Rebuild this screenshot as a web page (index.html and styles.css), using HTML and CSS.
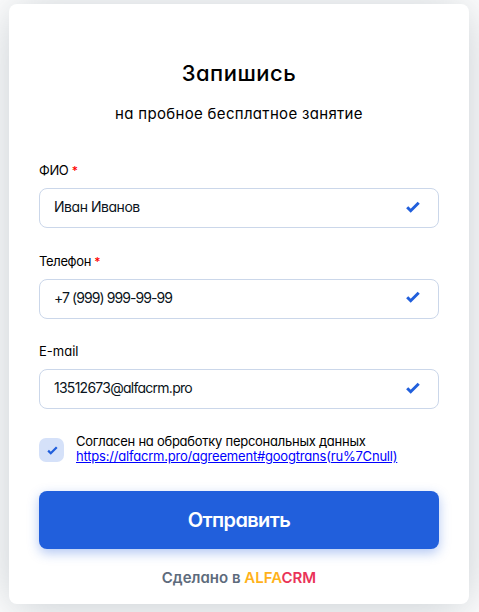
FILE: index.html
```html
<!DOCTYPE html>
<html lang="ru">
<head>
  <meta charset="UTF-8">
  <meta name="viewport" content="width=device-width, initial-scale=1.0">
  <title>Запись на занятие</title>
  <link rel="stylesheet" href="styles.css">
</head>
<body>
  <form class="form-card">
    <h1 class="form-title">Запишись</h1>
    <p class="form-subtitle">на пробное бесплатное занятие</p>

    <div class="field">
      <label class="field-label" for="name">ФИО <span class="required">*</span></label>
      <div class="field-box">
        <input class="field-input input-name" id="name" type="text" value="Иван Иванов">
        <svg class="check" viewBox="0 0 14 12"><path d="M1.2 6.2 4.7 9.7 12.7 1.7"/></svg>
      </div>
    </div>

    <div class="field">
      <label class="field-label" for="phone">Телефон <span class="required">*</span></label>
      <div class="field-box">
        <input class="field-input input-phone" id="phone" type="tel" value="+7 (999) 999-99-99">
        <svg class="check check-raised" viewBox="0 0 14 12"><path d="M1.2 6.2 4.7 9.7 12.7 1.7"/></svg>
      </div>
    </div>

    <div class="field">
      <label class="field-label label-email" for="email">E-mail</label>
      <div class="field-box">
        <input class="field-input input-email" id="email" type="text" value="13512673@alfacrm.pro">
        <svg class="check" viewBox="0 0 14 12"><path d="M1.2 6.2 4.7 9.7 12.7 1.7"/></svg>
      </div>
    </div>

    <div class="agreement">
      <span class="checkbox">
        <svg class="check-small" viewBox="0 0 14 12"><path d="M1.2 6.2 4.7 9.7 12.7 1.7"/></svg>
      </span>
      <div class="agreement-text">
        <div class="agreement-line">Согласен на обработку персональных данных</div>
        <a class="agreement-link" href="https://alfacrm.pro/agreement#googtrans(ru%7Cnull)">https://alfacrm.pro/agreement#googtrans(ru%7Cnull)</a>
      </div>
    </div>

    <button class="submit" type="button">Отправить</button>

    <div class="made-in">Сделано в <span class="brand"><span class="alfa">ALFA</span><span class="crm">CRM</span></span></div>
  </form>
</body>
</html>
```

FILE: styles.css
```css
* {
  box-sizing: border-box;
}

body {
  margin: 0;
  padding: 4px 10px 8px 9px;
  height: 612px;
  overflow: hidden;
  background: #fff;
  color: #000;
  font-family: Inter, 'Open Sans', sans-serif;
  font-feature-settings: "cv11";
}

.form-card {
  display: flex;
  flex-direction: column;
  width: 460px;
  height: 600px;
  padding: 54px 30px 0;
  border-radius: 8px;
  background: #fff;
  box-shadow: 0 4px 50px rgba(60, 78, 95, 0.3);
}

.form-title {
  margin: 0;
  font-size: 22px;
  line-height: 30px;
  font-weight: 500;
  letter-spacing: 0.5px;
  text-align: center;
}

.form-subtitle {
  margin: 16px 0 45px;
  font-size: 15px;
  line-height: 20px;
  font-weight: 400;
  letter-spacing: 0.32px;
  text-align: center;
}

.field {
  height: 90.5px;
}

.field-label {
  display: block;
  height: 19px;
  font-size: 13px;
  line-height: 2px;
  font-weight: 370;
  letter-spacing: -0.35px;
}

.label-email {
  letter-spacing: 0;
}

.required {
  color: #f00;
  font-size: 12px;
  font-weight: 500;
}

.field-box {
  display: flex;
  align-items: center;
  height: 40px;
  padding: 0 18px 0 14px;
  border: 1px solid #cbd7ea;
  border-radius: 8px;
}

.field-input {
  flex: 1;
  min-width: 0;
  height: 38px;
  padding: 0 0 3px;
  border: none;
  outline: none;
  background: none;
  color: #0b1420;
  font-family: inherit;
  font-feature-settings: inherit;
  font-size: 14px;
  font-weight: 370;
}

.input-name {
  letter-spacing: -0.46px;
}

.input-phone {
  letter-spacing: -0.93px;
}

.input-email {
  letter-spacing: -0.74px;
}

.check {
  width: 14px;
  height: 12px;
  margin-bottom: 2px;
}

.check-raised {
  margin-bottom: 4px;
}

.check path,
.check-small path {
  fill: none;
  stroke: #215fdc;
  stroke-width: 3;
}

.agreement {
  display: flex;
  gap: 12px;
  margin-top: -7px;
}

.checkbox {
  display: flex;
  align-items: center;
  justify-content: center;
  width: 25px;
  height: 24px;
  margin-top: 4px;
  border-radius: 7px;
  background: #d5e1f9;
}

.check-small {
  width: 11px;
  height: 9px;
  margin: 2px 0 0 1px;
}

.agreement-text {
  font-size: 13px;
  line-height: 15px;
  font-weight: 370;
  letter-spacing: -0.26px;
  white-space: nowrap;
}

.agreement-link {
  color: #00f;
  letter-spacing: -0.2px;
}

.submit {
  height: 58px;
  margin-top: 27px;
  padding: 0;
  border: none;
  border-radius: 8px;
  background: #215fdc;
  box-shadow: 0 4px 12px rgba(33, 95, 220, 0.35);
  color: #fff;
  font-family: inherit;
  font-feature-settings: inherit;
  font-size: 20px;
  font-weight: 600;
  letter-spacing: -0.6px;
}

.made-in {
  margin-top: 19px;
  color: #5d6b7c;
  font-size: 15px;
  line-height: 20px;
  font-weight: 600;
  text-align: center;
}

.alfa {
  color: #ffb21a;
}

.crm {
  color: #ea3358;
}
```
